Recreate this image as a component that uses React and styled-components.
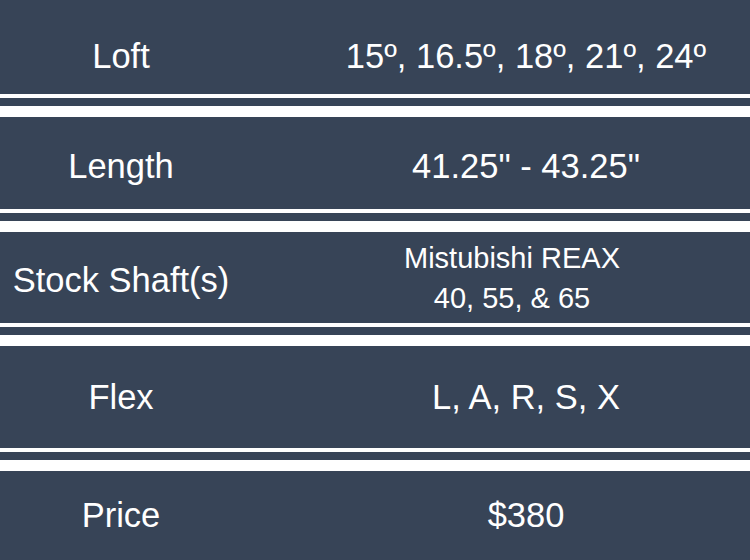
import React from "react";
import styled, { createGlobalStyle } from "styled-components";

const Global = createGlobalStyle`
  html, body { margin: 0; padding: 0; background: #ffffff; }
  body { font-family: "Liberation Sans", Arial, sans-serif; }
`;

const Table = styled.div`
  width: 750px;
  height: 560px;
  overflow: hidden;
  display: flex;
  flex-direction: column;
  background: #ffffff;
`;

const Band = styled.div`
  height: ${(p) => p.$h}px;
  padding-top: ${(p) => p.$pt || 0}px;
  box-sizing: border-box;
  background: #374457;
  display: grid;
  grid-template-columns: 242px 60px 1fr;
  align-items: center;
  color: #ffffff;
  flex-shrink: 0;
`;

const Label = styled.div`
  grid-column: 1;
  text-align: center;
  font-size: 34.5px;
  line-height: 1;
  white-space: nowrap;
  padding-top: ${(p) => p.$dy || 0}px;
`;

const Value = styled.div`
  grid-column: 3;
  text-align: center;
  font-size: ${(p) => (p.$small ? 29 : 34.5)}px;
  line-height: ${(p) => (p.$small ? "40px" : 1)};
  white-space: nowrap;
  padding-right: ${(p) => p.$pr || 0}px;
`;

const Separator = styled.div`
  flex-shrink: 0;
  display: flex;
  flex-direction: column;
`;

const Gap = styled.div`
  height: ${(p) => p.$h}px;
  background: #ffffff;
`;

const Strip = styled.div`
  height: 8px;
  background: #374457;
`;

const rows = [
  { label: "Loft", value: ["15º, 16.5º, 18º, 21º, 24º"], h: 94, pt: 18 },
  { label: "Length", value: ["41.25\" - 43.25\""], h: 92, pt: 6 },
  {
    label: "Stock Shaft(s)",
    value: ["Mistubishi REAX", "40, 55, & 65"],
    h: 91,
    small: true,
    dy: 5,
    pr: 28,
  },
  { label: "Flex", value: ["L, A, R, S, X"], h: 102 },
  { label: "Price", value: ["$380"], h: 89 },
];

export default function App() {
  return (
    <>
      <Global />
      <Table>
        {rows.map((r, i) => (
          <React.Fragment key={r.label}>
            <Band $h={r.h} $pt={r.pt}>
              <Label $dy={r.dy}>{r.label}</Label>
              <Value $small={r.small} $pr={r.pr}>
                {r.value.map((v) => (
                  <div key={v}>{v}</div>
                ))}
              </Value>
            </Band>
            {i < rows.length - 1 && (
              <Separator>
                <Gap $h={4} />
                <Strip />
                <Gap $h={11} />
              </Separator>
            )}
          </React.Fragment>
        ))}
      </Table>
    </>
  );
}
